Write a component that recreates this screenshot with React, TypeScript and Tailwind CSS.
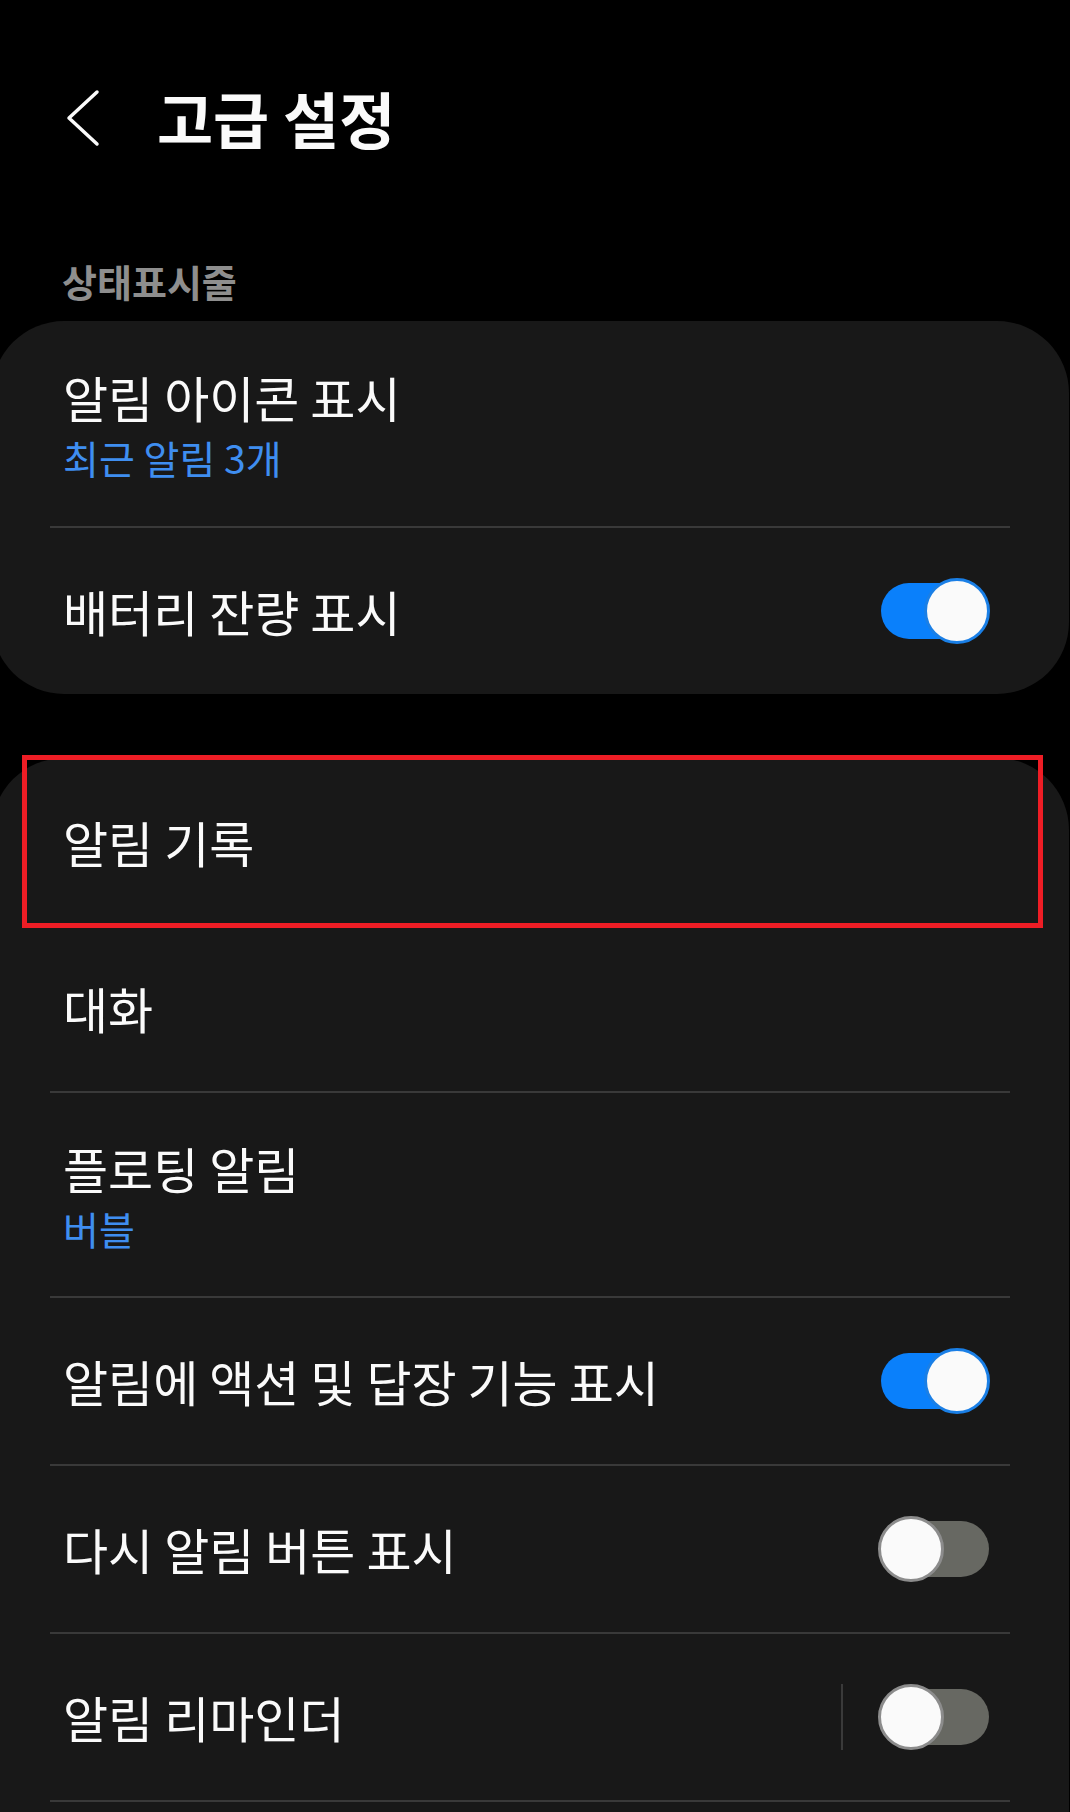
import React from "react"

function Toggle({ on }: { on: boolean }) {
  return (
    <div className={"relative w-[108px] h-[56px] rounded-full shrink-0 " + (on ? "bg-[#0a80fb]" : "bg-[#676862]")}>
      {on ? (
        <div className="absolute top-[-5px] right-[-1px] w-[66px] h-[66px] rounded-full bg-[#fafafa] border-[3px] border-[#1a7fe6]" />
      ) : (
        <div className="absolute top-[-5px] left-[-3px] w-[66px] h-[66px] rounded-full bg-[#fafafa] border-[3px] border-[#8c8c8c]" />
      )}
    </div>
  )
}

function Divider() {
  return <div className="h-[2px] bg-[#393939] ml-[58px] mr-[59px]" />
}

function Row({ title, sub, toggle, height, sep }: { title: string; sub?: string; toggle?: boolean; height: string; sep?: boolean }) {
  return (
    <div className={"flex items-center pl-[71px] pr-[80px] " + height}>
      <div className="flex-1 flex flex-col">
        <span className="text-[49px] leading-[56px] text-[#fafafa]">{title}</span>
        {sub && <span className="mt-[10px] text-[39px] leading-[44px] text-[#3f8ef0]">{sub}</span>}
      </div>
      {sep && <div className="w-[2px] h-[66px] bg-[#3a3a3a] mr-[38px]" />}
      {toggle !== undefined && <Toggle on={toggle} />}
    </div>
  )
}

export default function App() {
  return (
    <div className="w-[1070px] h-[1812px] overflow-hidden bg-black font-['Noto_Sans_CJK_KR','Noto_Sans',sans-serif]">
      {/* header */}
      <div className="flex items-center h-[120px] mt-[64px]">
        <svg className="ml-[62px] -mt-[8px]" width="40" height="64" viewBox="0 0 40 64" fill="none">
          <path d="M35 4 L7 30 L35 56" stroke="#fafafa" strokeWidth="3.5" strokeLinecap="round" strokeLinejoin="round" />
        </svg>
        <h1 className="ml-[55px] -mt-[12px] text-[61px] leading-[70px] font-bold text-[#fafafa]">고급 설정</h1>
      </div>

      <div className="mt-[75px] h-[44px] leading-[44px] pl-[62px] text-[38px] font-semibold text-[#8e8e8e]">상태표시줄</div>

      {/* 상태표시줄 카드 */}
      <div className="mt-[18px] -ml-[8px] mr-[1px] rounded-[72px] bg-[#181818]">
        <Row title="알림 아이콘 표시" sub="최근 알림 3개" height="h-[205px]" />
        <Divider />
        <Row title="배터리 잔량 표시" toggle={true} height="h-[166px]" />
      </div>

      {/* 알림 카드 */}
      <div className="relative mt-[64px] -ml-[8px] mr-[1px] rounded-t-[72px] bg-[#181818] pb-[100px]">
        <Row title="알림 기록" height="h-[167px]" />
        <Row title="대화" height="h-[166px]" />
        <Divider />
        <Row title="플로팅 알림" sub="버블" height="h-[203px]" />
        <Divider />
        <Row title="알림에 액션 및 답장 기능 표시" toggle={true} height="h-[166px]" />
        <Divider />
        <Row title="다시 알림 버튼 표시" toggle={false} height="h-[166px]" />
        <Divider />
        <Row title="알림 리마인더" toggle={false} sep height="h-[166px]" />
        <Divider />
        {/* highlight box */}
        <div className="absolute top-[-3px] left-[30px] w-[1021px] h-[173px] border-[5px] border-[#ee1d25]" />
      </div>
    </div>
  )
}
